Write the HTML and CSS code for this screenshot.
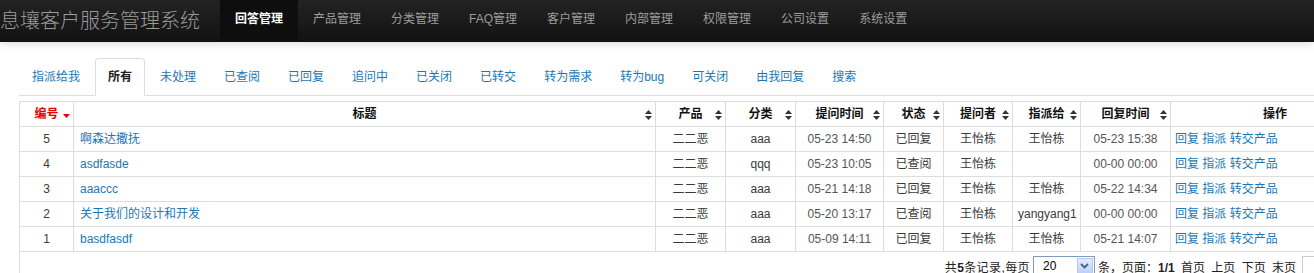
FILE: index.html
```html
<!DOCTYPE html>
<html lang="zh-CN">
<head>
<meta charset="utf-8">
<title>息壤客户服务管理系统</title>
<link rel="stylesheet" href="styles.css">
</head>
<body>
<div class="navbar">
  <div class="brand">息壤客户服务管理系统</div>
  <ul class="nav">
    <li class="active"><a href="#">回答管理</a></li>
    <li><a href="#">产品管理</a></li>
    <li><a href="#">分类管理</a></li>
    <li><a href="#">FAQ管理</a></li>
    <li><a href="#">客户管理</a></li>
    <li><a href="#">内部管理</a></li>
    <li><a href="#">权限管理</a></li>
    <li><a href="#">公司设置</a></li>
    <li><a href="#">系统设置</a></li>
  </ul>
</div>

<div class="main">
  <ul class="tabs">
    <li><a href="#">指派给我</a></li>
    <li class="active"><a href="#">所有</a></li>
    <li><a href="#">未处理</a></li>
    <li><a href="#">已查阅</a></li>
    <li><a href="#">已回复</a></li>
    <li><a href="#">追问中</a></li>
    <li><a href="#">已关闭</a></li>
    <li><a href="#">已转交</a></li>
    <li><a href="#">转为需求</a></li>
    <li><a href="#">转为bug</a></li>
    <li><a href="#">可关闭</a></li>
    <li><a href="#">由我回复</a></li>
    <li><a href="#">搜索</a></li>
  </ul>

  <div class="grid">
    <table class="list">
      <colgroup>
        <col class="w-id"><col class="w-title"><col class="w-prod"><col class="w-cat"><col class="w-time">
        <col class="w-state"><col class="w-user"><col class="w-assign"><col class="w-rtime"><col class="w-ops">
      </colgroup>
      <thead>
        <tr>
          <th class="sorted">编号<svg class="ico down" width="7" height="4" viewBox="0 0 7 4"><path d="M0 0H7L3.5 4Z"/></svg></th>
          <th>标题<svg class="ico" width="7" height="10" viewBox="0 0 7 10"><path d="M0 4L3.5 0L7 4Z M0 6H7L3.5 10Z"/></svg></th>
          <th>产品<svg class="ico" width="7" height="10" viewBox="0 0 7 10"><path d="M0 4L3.5 0L7 4Z M0 6H7L3.5 10Z"/></svg></th>
          <th>分类<svg class="ico" width="7" height="10" viewBox="0 0 7 10"><path d="M0 4L3.5 0L7 4Z M0 6H7L3.5 10Z"/></svg></th>
          <th>提问时间<svg class="ico" width="7" height="10" viewBox="0 0 7 10"><path d="M0 4L3.5 0L7 4Z M0 6H7L3.5 10Z"/></svg></th>
          <th>状态<svg class="ico" width="7" height="10" viewBox="0 0 7 10"><path d="M0 4L3.5 0L7 4Z M0 6H7L3.5 10Z"/></svg></th>
          <th>提问者<svg class="ico" width="7" height="10" viewBox="0 0 7 10"><path d="M0 4L3.5 0L7 4Z M0 6H7L3.5 10Z"/></svg></th>
          <th>指派给<svg class="ico" width="7" height="10" viewBox="0 0 7 10"><path d="M0 4L3.5 0L7 4Z M0 6H7L3.5 10Z"/></svg></th>
          <th>回复时间<svg class="ico" width="7" height="10" viewBox="0 0 7 10"><path d="M0 4L3.5 0L7 4Z M0 6H7L3.5 10Z"/></svg></th>
          <th>操作</th>
        </tr>
      </thead>
      <tbody>
        <tr>
          <td>5</td><td class="title"><a href="#">啊森达撒抚</a></td><td>二二恶</td><td>aaa</td><td class="time">05-23 14:50</td>
          <td>已回复</td><td>王怡栋</td><td>王怡栋</td><td class="time">05-23 15:38</td>
          <td class="ops"><a href="#">回复</a> <a href="#">指派</a> <a href="#">转交产品</a></td>
        </tr>
        <tr>
          <td>4</td><td class="title"><a href="#">asdfasde</a></td><td>二二恶</td><td>qqq</td><td class="time">05-23 10:05</td>
          <td>已查阅</td><td>王怡栋</td><td></td><td class="time">00-00 00:00</td>
          <td class="ops"><a href="#">回复</a> <a href="#">指派</a> <a href="#">转交产品</a></td>
        </tr>
        <tr>
          <td>3</td><td class="title"><a href="#">aaaccc</a></td><td>二二恶</td><td>aaa</td><td class="time">05-21 14:18</td>
          <td>已回复</td><td>王怡栋</td><td>王怡栋</td><td class="time">05-22 14:34</td>
          <td class="ops"><a href="#">回复</a> <a href="#">指派</a> <a href="#">转交产品</a></td>
        </tr>
        <tr>
          <td>2</td><td class="title"><a href="#">关于我们的设计和开发</a></td><td>二二恶</td><td>aaa</td><td class="time">05-20 13:17</td>
          <td>已查阅</td><td>王怡栋</td><td>yangyang1</td><td class="time">00-00 00:00</td>
          <td class="ops"><a href="#">回复</a> <a href="#">指派</a> <a href="#">转交产品</a></td>
        </tr>
        <tr>
          <td>1</td><td class="title"><a href="#">basdfasdf</a></td><td>二二恶</td><td>aaa</td><td class="time">05-09 14:11</td>
          <td>已回复</td><td>王怡栋</td><td>王怡栋</td><td class="time">05-21 14:07</td>
          <td class="ops"><a href="#">回复</a> <a href="#">指派</a> <a href="#">转交产品</a></td>
        </tr>
      </tbody>
    </table>

    <div class="pager">
      <span class="count">共<b>5</b>条记录,每页</span>
      <span class="select"><span class="val">20</span><span class="arrow"><svg width="9" height="6" viewBox="0 0 9 6"><path d="M1 1L4.5 4.5L8 1" fill="none" stroke="#4d6185" stroke-width="1.8"/></svg></span></span>
      <span class="pages">条，页面：<b>1/1</b> 首页 上页 下页 末页</span>
      <span class="jump"></span>
    </div>
  </div>
</div>
</body>
</html>
```

FILE: styles.css
```css
html, body {
  margin: 0;
  padding: 0;
  overflow: hidden;
  background: #fff;
}

body {
  font-family: "Liberation Sans", "Noto Sans CJK SC", sans-serif;
  font-size: 12px;
  color: #333;
}

a {
  text-decoration: none;
  color: #1a78b6;
}

/* ---------- top navbar ---------- */
.navbar {
  display: flex;
  height: 42px;
  background: linear-gradient(#232323, #121212);
  box-shadow: 0 2px 8px rgba(0, 0, 0, 0.13);
  position: relative;
  z-index: 1;
}

.brand {
  padding: 9px 20px 9px 0;
  font-size: 20px;
  line-height: 22px;
  color: #9a9a9a;
  white-space: nowrap;
  font-family: "Noto Sans CJK SC", sans-serif;
  font-weight: 300;
}

.nav {
  display: flex;
  margin: 0;
  padding: 0;
  list-style: none;
}

.nav a {
  display: block;
  padding: 9px 15px 13px;
  line-height: 20px;
  color: #9d9d9d;
  white-space: nowrap;
}

.nav .active a {
  background: #0e0e0e;
  color: #fff;
  font-weight: bold;
}

/* ---------- main area ---------- */
.main {
  margin-left: 19px;
  width: 1361px;
}

.tabs {
  display: flex;
  margin: 16px 0 0;
  padding: 0;
  list-style: none;
  border-bottom: 1px solid #ddd;
}

.tabs li {
  margin-bottom: -1px;
}

.tabs a {
  display: block;
  padding: 8px 12px;
  margin-right: 2px;
  line-height: 20px;
  border: 1px solid transparent;
  border-radius: 4px 4px 0 0;
  white-space: nowrap;
}

.tabs .active a {
  background: #fff;
  border-color: #ddd #ddd transparent;
  color: #222;
  font-weight: bold;
}

/* ---------- grid ---------- */
.grid {
  margin-top: 5px;
  border: 1px solid #ddd;
  height: 200px;
}

.list {
  border-collapse: separate;
  border-spacing: 0;
  table-layout: fixed;
  width: 1360px;
}

.w-id { width: 54px; }
.w-title { width: 582px; }
.w-prod { width: 70px; }
.w-cat { width: 70px; }
.w-time { width: 88px; }
.w-state { width: 60px; }
.w-user { width: 69px; }
.w-assign { width: 68px; }
.w-rtime { width: 90px; }
.w-ops { width: 209px; }

.list th,
.list td {
  padding: 4px 5px;
  line-height: 16px;
  border-right: 1px solid #ddd;
  border-bottom: 1px solid #ddd;
  text-align: center;
  white-space: nowrap;
  overflow: hidden;
}

.list th {
  position: relative;
  font-weight: bold;
  color: #111;
}

.list th.sorted {
  color: #e60000;
}

.ico {
  position: absolute;
  right: 3px;
  top: 8px;
  fill: #333;
}

.ico.down {
  top: 12px;
  fill: #e60000;
}

.list td {
  color: #3a3a3a;
}

.list td.time {
  color: #555;
}

.list td.title {
  text-align: left;
  padding-left: 6px;
}

.list td.ops {
  text-align: left;
  padding-left: 4px;
}

/* ---------- pager ---------- */
.pager {
  display: flex;
  justify-content: flex-end;
  align-items: center;
  gap: 3px;
  padding: 4px 37px 0 0;
  color: #222;
}

.pager .count {
  letter-spacing: 0.4px;
}

.pager .pages {
  word-spacing: 3px;
}

.pager b {
  font-weight: bold;
}

.select {
  display: flex;
  align-items: stretch;
  width: 62px;
  height: 20px;
  border: 1px solid #7f9db9;
  background: #fff;
  box-sizing: border-box;
}

.select .val {
  flex: 1;
  padding-left: 9px;
  line-height: 18px;
  color: #000;
}

.select .arrow {
  display: flex;
  align-items: center;
  justify-content: center;
  width: 16px;
  margin: 1px;
  background: linear-gradient(#e4ecfc, #bdd0f8);
  border: 1px solid #b5c8f2;
  box-sizing: border-box;
}

.jump {
  display: block;
  width: 40px;
  height: 20px;
  border: 1px solid #ccc;
  box-sizing: border-box;
  margin-left: 3px;
}
```
